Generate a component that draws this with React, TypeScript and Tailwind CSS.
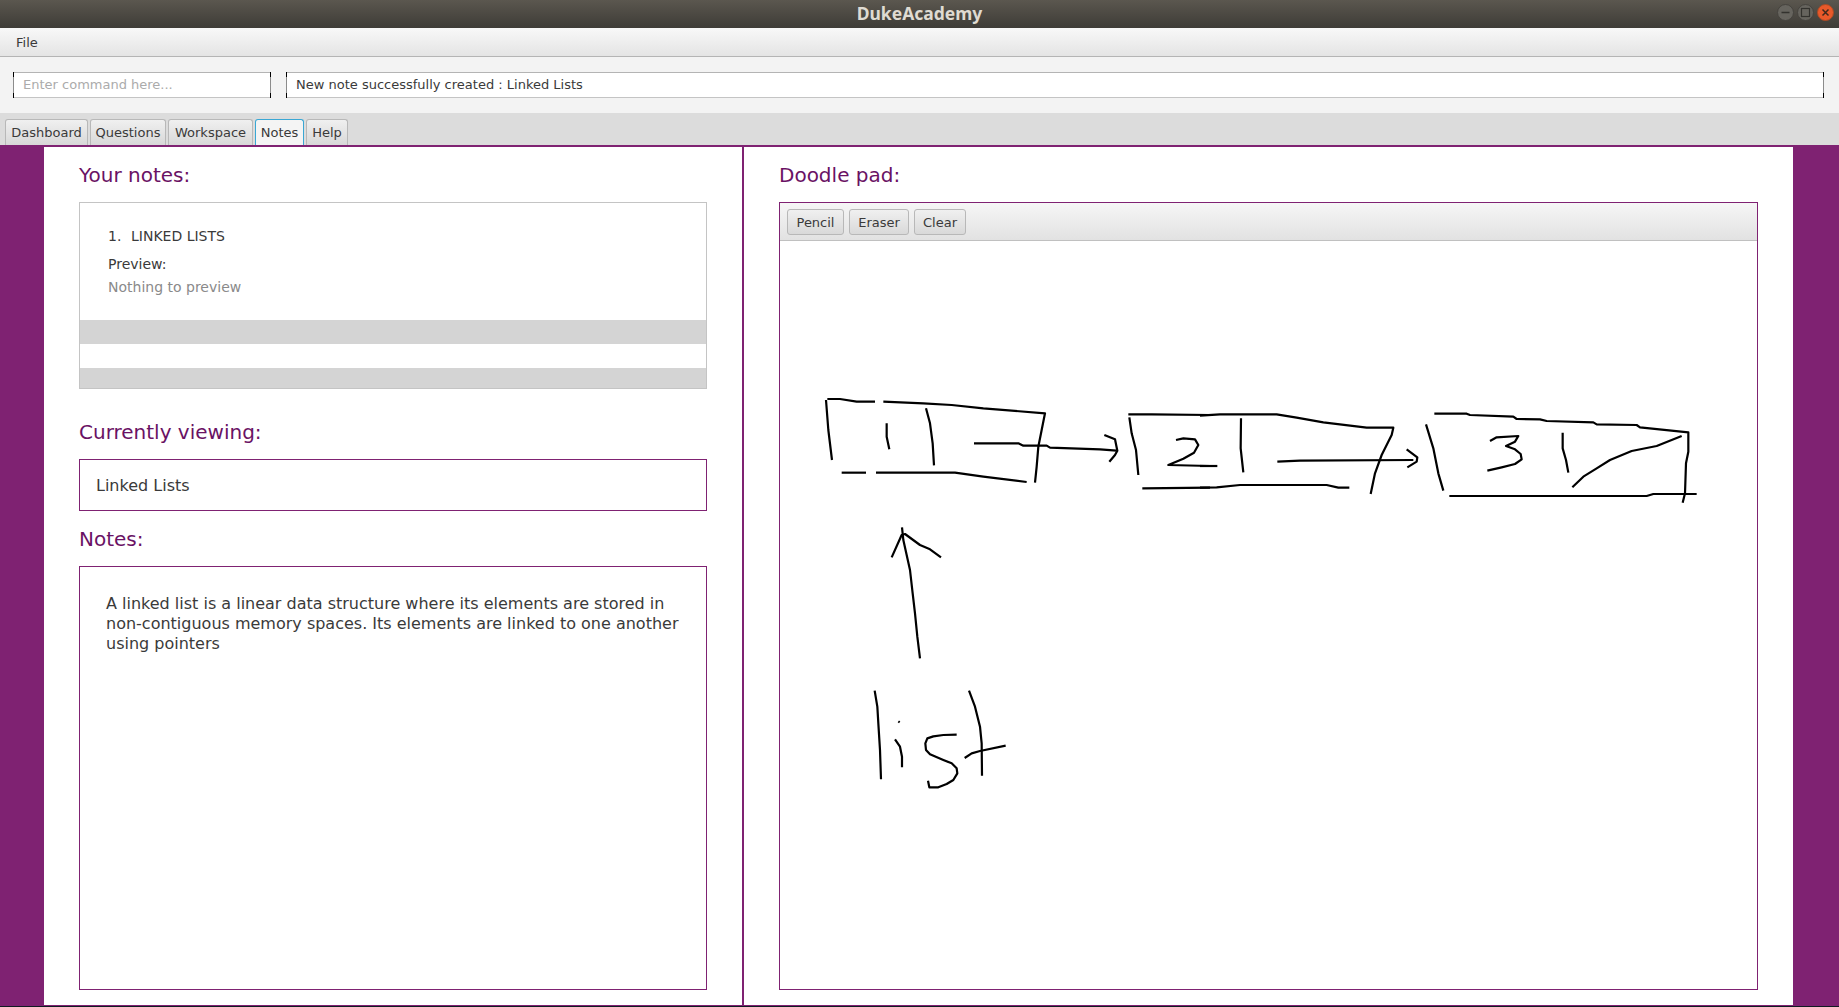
import React from 'react';

type Stroke = number[];

// doodle strokes are written in zoomed-crop coordinates (3x) and mapped back to page pixels
const CROPS: { ox: number; oy: number; strokes: Stroke[] }[] = [
  {
    ox: 770,
    oy: 380,
    strokes: [
      [168, 60, 175, 150, 186, 240],
      [172, 57, 210, 57, 260, 65, 315, 65],
      [340, 65, 460, 70, 545, 75, 640, 85, 825, 100, 815, 150, 805, 200, 800, 260, 795, 308],
      [350, 130, 350, 170, 358, 208],
      [468, 85, 480, 130, 488, 190, 492, 256],
      [215, 278, 288, 278],
      [318, 278, 555, 278, 640, 290, 770, 306],
      [612, 190, 745, 190, 760, 197, 830, 197, 840, 203, 990, 208, 1040, 212],
      [1003, 165, 1035, 178, 1042, 212, 1035, 225, 1018, 245],
      [1078, 112, 1085, 160, 1098, 210, 1105, 285],
      [1075, 103, 1145, 103, 1320, 105],
      [1218, 180, 1240, 175, 1275, 178, 1285, 195, 1272, 218, 1240, 236, 1195, 255, 1320, 258],
      [1117, 325, 1320, 323],
    ],
  },
  {
    ox: 1200,
    oy: 380,
    strokes: [
      [0, 107, 60, 103, 230, 103, 290, 113, 370, 127, 500, 143, 580, 143, 575, 165, 545, 225, 525, 280, 512, 342],
      [0, 258, 52, 258],
      [123, 115, 122, 205, 130, 277],
      [0, 323, 50, 322, 120, 315, 380, 315, 415, 323, 448, 323],
      [232, 245, 300, 242, 640, 240],
      [620, 208, 652, 232, 650, 245, 622, 262],
      [678, 133, 700, 205, 715, 280, 730, 332],
      [703, 101, 800, 101, 810, 105, 940, 110, 950, 117, 1020, 118, 1040, 123, 1180, 127, 1190, 133, 1310, 135, 1320, 142, 1465, 157, 1465, 215, 1458, 250, 1455, 340, 1448, 368],
      [748, 348, 1340, 348, 1360, 342, 1490, 342],
      [870, 183, 890, 172, 955, 168, 945, 185, 918, 198, 945, 208, 962, 222, 965, 238, 945, 252, 905, 262, 862, 272],
      [1088, 158, 1088, 205, 1098, 240, 1105, 278],
      [1117, 322, 1150, 290, 1190, 265, 1230, 240, 1295, 213, 1370, 198, 1445, 168],
    ],
  },
  {
    ox: 840,
    oy: 510,
    strokes: [
      [186, 52, 190, 90, 210, 180, 218, 250, 225, 310, 232, 380, 240, 445],
      [155, 142, 185, 75, 195, 72, 240, 105, 270, 118, 303, 142],
      [104, 542, 112, 590, 115, 640, 120, 720, 123, 808],
      [175, 634, 179, 637],
      [165, 688, 180, 710, 186, 740, 186, 772],
      [350, 674, 310, 675, 280, 679, 262, 685, 256, 700, 258, 720, 270, 733, 310, 750, 335, 760, 350, 775, 352, 790, 340, 810, 320, 822, 295, 832, 268, 832, 264, 812],
      [387, 542, 405, 590, 420, 650, 425, 700, 426, 797],
      [374, 744, 395, 730, 420, 723, 497, 707],
    ],
  },
];

function strokePoints(ox: number, oy: number, s: Stroke) {
  const pts: string[] = [];
  for (let i = 0; i < s.length; i += 2) {
    pts.push(`${ox + s[i] / 3},${oy + s[i + 1] / 3}`);
  }
  return pts.join(' ');
}

function Doodle() {
  return (
    <svg className="block h-full w-full" viewBox="780 241 977 748" preserveAspectRatio="none">
      {CROPS.map((c) =>
        c.strokes.map((s, i) => (
          <polyline
            key={`${c.ox}-${i}`}
            points={strokePoints(c.ox, c.oy, s)}
            fill="none"
            stroke="#000"
            strokeWidth={2.2}
            strokeLinejoin="round"
          />
        ))
      )}
    </svg>
  );
}

function WindowButtons() {
  return (
    <div className="absolute right-[5px] top-[4px] flex gap-[3px]">
      <svg width="17" height="17" viewBox="0 0 17 17">
        <circle cx="8.5" cy="8.5" r="8" fill="#66645e" stroke="#45433e" />
        <path d="M4.5 8.5h8" stroke="#33322e" strokeWidth="1.5" />
      </svg>
      <svg width="17" height="17" viewBox="0 0 17 17">
        <circle cx="8.5" cy="8.5" r="8" fill="#66645e" stroke="#45433e" />
        <rect x="4.5" y="4.5" width="8" height="8" fill="none" stroke="#33322e" strokeWidth="1.2" />
      </svg>
      <svg width="17" height="17" viewBox="0 0 17 17">
        <circle cx="8.5" cy="8.5" r="8" fill="#e9592a" stroke="#a94a26" />
        <path d="M5.5 5.5l6 6M11.5 5.5l-6 6" stroke="#40291c" strokeWidth="1.5" />
      </svg>
    </div>
  );
}

function Field({ className, children }: { className: string; children: React.ReactNode }) {
  return (
    <div className={`relative flex h-[26px] items-center border border-t-[#b4b4b4] border-b-[#c4c4c4] border-x-[#8c8c8c] bg-white ${className}`}>
      {/* the dark ticks on the field's corners */}
      <span className="absolute -left-px -top-px h-[5px] w-px bg-black" />
      <span className="absolute -bottom-px -left-px h-[5px] w-px bg-black" />
      <span className="absolute -right-px -top-px h-[5px] w-px bg-black" />
      <span className="absolute -bottom-px -right-px h-[5px] w-px bg-black" />
      {children}
    </div>
  );
}

function Tab({ label, width, active }: { label: string; width: string; active?: boolean }) {
  return (
    <div
      className={`flex h-[26px] items-center justify-center rounded-t-[3px] border border-b-0 pt-px ${width} ${
        active
          ? 'border-[#3aa7d4] bg-[#f4f4f4]'
          : 'border-[#b8b8b8] bg-gradient-to-b from-[#f0f0f0] to-[#d8d8d8]'
      }`}
    >
      {label}
    </div>
  );
}

function Heading({ children, className = '' }: { children: React.ReactNode; className?: string }) {
  return <h2 className={`h-6 text-[20px] leading-6 text-[#6a1264] ${className}`}>{children}</h2>;
}

function ToolButton({ label, width }: { label: string; width: string }) {
  return (
    <div className={`flex h-[26px] items-center justify-center rounded-[3px] border border-[#b8b8b8] bg-gradient-to-b from-[#f0f0f0] to-[#d9d9d9] pt-[2px] ${width}`}>
      {label}
    </div>
  );
}

export default function App() {
  return (
    <div className="flex h-[1007px] w-[1839px] flex-col overflow-hidden bg-white font-['DejaVu_Sans',sans-serif] text-[13px] text-[#3a3a3a]">
      <div className="relative flex h-[28px] shrink-0 items-center justify-center bg-gradient-to-b from-[#5b574f] to-[#3e3c37] pb-[2px]">
        <span className="font-['Noto_Sans',sans-serif] text-[17.5px] font-bold text-[#dfdbd2]">DukeAcademy</span>
        <WindowButtons />
      </div>

      <div className="flex h-[29px] shrink-0 items-center border-b border-[#b4b4b4] bg-gradient-to-b from-[#f8f8f8] to-[#e4e4e4] pl-4 pt-[2px]">
        File
      </div>

      <div className="flex h-[56px] shrink-0 items-center bg-[#f3f3f3] pl-[13px]">
        <Field className="w-[258px] pl-[9px] text-[#ababab]">Enter command here...</Field>
        <Field className="ml-[15px] w-[1538px] pl-[9px]">New note successfully created : Linked Lists</Field>
      </div>

      <div className="flex h-[32px] shrink-0 items-end gap-[2px] bg-[#dcdcdc] pl-[5px] pr-0">
        <Tab label="Dashboard" width="w-[83px]" />
        <Tab label="Questions" width="w-[76px]" />
        <Tab label="Workspace" width="w-[85px]" />
        <Tab label="Notes" width="w-[49px]" active />
        <Tab label="Help" width="w-[42px]" />
      </div>

      <div className="flex min-h-0 flex-1 border-t-2 border-[#7f2272] bg-[#7f2272] pb-[1px]">
        <div className="ml-[44px] flex w-[1749px] bg-white">
          <div className="w-[698px] pl-[35px] pt-[16px]">
            <Heading>Your notes:</Heading>
            <div className="mt-[15px] flex h-[187px] w-[628px] flex-col border border-[#c4c4c4]">
              <div className="h-[117px] px-[28px] pt-[25px] text-[14px]">
                <div className="flex h-4 items-center">
                  <span className="w-[23px]">1.</span>
                  <span>LINKED LISTS</span>
                </div>
                <div className="mt-[12px] leading-4">Preview:</div>
                <div className="mt-[7px] leading-4 text-[#8a8a8a]">Nothing to preview</div>
              </div>
              <div className="h-[24px] bg-[#d4d4d4]" />
              <div className="h-[24px]" />
              <div className="flex-1 bg-[#d4d4d4]" />
            </div>

            <Heading className="mt-[31px]">Currently viewing:</Heading>
            <div className="mt-[15px] flex h-[52px] w-[628px] items-center border border-[#7f2272] pl-[16px] pt-px text-[16px]">
              Linked Lists
            </div>

            <Heading className="mt-[16px]">Notes:</Heading>
            <div className="mt-[15px] h-[424px] w-[628px] border border-[#7f2272] pl-[26px] pr-[20px] pt-[27px] text-[16px] leading-5">
              A linked list is a linear data structure where its elements are stored in non-contiguous memory spaces. Its elements are linked to one another using pointers
            </div>
          </div>

          <div className="w-[2px] bg-[#7f2272]" />

          <div className="flex-1 pl-[35px] pt-[16px]">
            <Heading>Doodle pad:</Heading>
            <div className="mt-[15px] flex h-[788px] w-[979px] flex-col border border-[#7f2272]">
              <div className="flex h-[38px] shrink-0 items-center gap-[5px] border-b border-[#c0c0c0] bg-gradient-to-b from-[#f6f6f6] to-[#e2e2e2] pl-[7px]">
                <ToolButton label="Pencil" width="w-[57px]" />
                <ToolButton label="Eraser" width="w-[60px]" />
                <ToolButton label="Clear" width="w-[52px]" />
              </div>
              <div className="min-h-0 flex-1">
                <Doodle />
              </div>
            </div>
          </div>
        </div>
      </div>
      <div className="h-[1px] shrink-0 bg-[#101a22]" />
    </div>
  );
}
